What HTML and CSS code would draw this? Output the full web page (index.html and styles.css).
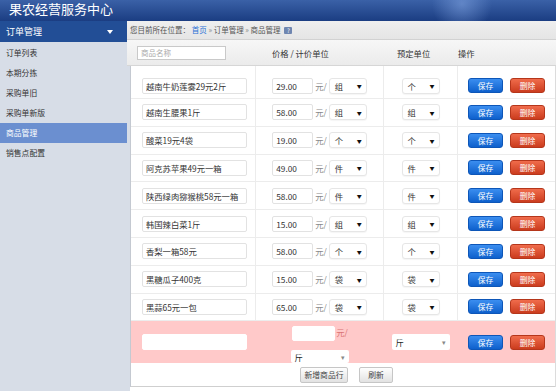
FILE: index.html
```html
<!DOCTYPE html>
<html>
<head>
<meta charset="utf-8">
<title>果农经营服务中心</title>
<link rel="stylesheet" href="styles.css">
</head>
<body>

<div class="top">
    <div class="brand">果农经营服务中心</div>
</div>

<div class="layout">
    <!-- Left menu -->
    <aside class="side">
        <div class="side-head">
            <span>订单管理</span>
            <span class="caret"></span>
        </div>
        <ul class="side-menu">
            <li>订单列表</li>
            <li>本期分拣</li>
            <li>采购单旧</li>
            <li>采购单新版</li>
            <li class="active">商品管理</li>
            <li>销售点配置</li>
        </ul>
    </aside>

    <main class="main">
        <div class="crumb">
            您目前所在位置： <a href="#">首页</a> <span class="sep">»</span> 订单管理 <span class="sep">»</span> 商品管理 <span class="help">?</span>
        </div>

        <div class="thead">
            <div><input class="search" type="text" placeholder="商品名称"></div>
            <div>价格 / 计价单位</div>
            <div>预定单位</div>
            <div>操作</div>
        </div>

        <div class="sheet">
            <table class="goods">
                <colgroup>
                    <col class="c-name">
                    <col class="c-price">
                    <col class="c-unit">
                    <col>
                </colgroup>
                <tbody>
                    <tr class="first">
                        <td class="name"><input class="txt" type="text" value="越南牛奶莲雾29元2斤"></td>
                        <td><div class="cell"><input class="txt num" type="text" value="29.00"><span class="per">元/</span><span class="sel">组</span></div></td>
                        <td><div class="cell"><span class="sel">个</span></div></td>
                        <td><div class="cell ops"><button class="btn save">保存</button><button class="btn del">删除</button></div></td>
                    </tr>
                    <tr>
                        <td class="name"><input class="txt" type="text" value="越南生腰果1斤"></td>
                        <td><div class="cell"><input class="txt num" type="text" value="58.00"><span class="per">元/</span><span class="sel">组</span></div></td>
                        <td><div class="cell"><span class="sel">组</span></div></td>
                        <td><div class="cell ops"><button class="btn save">保存</button><button class="btn del">删除</button></div></td>
                    </tr>
                    <tr>
                        <td class="name"><input class="txt" type="text" value="酸菜19元4袋"></td>
                        <td><div class="cell"><input class="txt num" type="text" value="19.00"><span class="per">元/</span><span class="sel">个</span></div></td>
                        <td><div class="cell"><span class="sel">个</span></div></td>
                        <td><div class="cell ops"><button class="btn save">保存</button><button class="btn del">删除</button></div></td>
                    </tr>
                    <tr>
                        <td class="name"><input class="txt" type="text" value="阿克苏苹果49元一箱"></td>
                        <td><div class="cell"><input class="txt num" type="text" value="49.00"><span class="per">元/</span><span class="sel">件</span></div></td>
                        <td><div class="cell"><span class="sel">件</span></div></td>
                        <td><div class="cell ops"><button class="btn save">保存</button><button class="btn del">删除</button></div></td>
                    </tr>
                    <tr>
                        <td class="name"><input class="txt" type="text" value="陕西绿肉猕猴桃58元一箱"></td>
                        <td><div class="cell"><input class="txt num" type="text" value="58.00"><span class="per">元/</span><span class="sel">件</span></div></td>
                        <td><div class="cell"><span class="sel">件</span></div></td>
                        <td><div class="cell ops"><button class="btn save">保存</button><button class="btn del">删除</button></div></td>
                    </tr>
                    <tr>
                        <td class="name"><input class="txt" type="text" value="韩国辣白菜1斤"></td>
                        <td><div class="cell"><input class="txt num" type="text" value="15.00"><span class="per">元/</span><span class="sel">组</span></div></td>
                        <td><div class="cell"><span class="sel">组</span></div></td>
                        <td><div class="cell ops"><button class="btn save">保存</button><button class="btn del">删除</button></div></td>
                    </tr>
                    <tr>
                        <td class="name"><input class="txt" type="text" value="香梨一箱58元"></td>
                        <td><div class="cell"><input class="txt num" type="text" value="58.00"><span class="per">元/</span><span class="sel">个</span></div></td>
                        <td><div class="cell"><span class="sel">个</span></div></td>
                        <td><div class="cell ops"><button class="btn save">保存</button><button class="btn del">删除</button></div></td>
                    </tr>
                    <tr>
                        <td class="name"><input class="txt" type="text" value="黑糖瓜子400克"></td>
                        <td><div class="cell"><input class="txt num" type="text" value="15.00"><span class="per">元/</span><span class="sel">袋</span></div></td>
                        <td><div class="cell"><span class="sel">袋</span></div></td>
                        <td><div class="cell ops"><button class="btn save">保存</button><button class="btn del">删除</button></div></td>
                    </tr>
                    <tr>
                        <td class="name"><input class="txt" type="text" value="黑蒜65元一包"></td>
                        <td><div class="cell"><input class="txt num" type="text" value="65.00"><span class="per">元/</span><span class="sel">袋</span></div></td>
                        <td><div class="cell"><span class="sel">袋</span></div></td>
                        <td><div class="cell ops"><button class="btn save">保存</button><button class="btn del">删除</button></div></td>
                    </tr>

                    <!-- New product row -->
                    <tr class="add">
                        <td class="name"><input class="txt blank" type="text"></td>
                        <td>
                            <div class="stack">
                                <div class="line"><input class="txt blank num-new" type="text"><span class="per red">元/</span></div>
                                <span class="drop small">斤</span>
                            </div>
                        </td>
                        <td><div class="cell"><span class="drop">斤</span></div></td>
                        <td><div class="cell ops"><button class="btn save">保存</button><button class="btn del">删除</button></div></td>
                    </tr>

                    <tr class="foot">
                        <td colspan="4">
                            <div class="cell actions">
                                <button class="btn-plain wide">新增商品行</button>
                                <button class="btn-plain">刷新</button>
                            </div>
                        </td>
                    </tr>
                </tbody>
            </table>
        </div>
    </main>
</div>

</body>
</html>
```

FILE: styles.css
```css
* {
    box-sizing: border-box;
}

body {
    margin: 0;
    width: 556px;
    height: 391px;
    overflow: hidden;
    font-family: "Noto Sans CJK SC", "Liberation Sans", sans-serif;
    font-size: 8.3px;
    color: #333;
    background: #fff;
}

/* top bar */
.top {
    height: 21px;
    padding-left: 9px;
    background:
        radial-gradient(circle at 462px 4px, rgba(140, 175, 235, 0.5), rgba(140, 175, 235, 0) 30px),
        linear-gradient(#3a61a7, #1b3d82);
}

.brand {
    color: #fff;
    font-size: 13px;
    line-height: 18px;
}

.layout {
    display: grid;
    grid-template-columns: 127px 1fr;
    height: 370px;
}

/* sidebar */
.side {
    background: #d7dde7;
}

.side-head {
    height: 21px;
    padding: 0 14px 0 6px;
    display: flex;
    align-items: center;
    justify-content: space-between;
    background: #224e96;
    color: #fff;
    font-size: 9px;
}

.caret {
    border-left: 3px solid transparent;
    border-right: 3px solid transparent;
    border-top: 4px solid #fff;
}

.side-menu {
    list-style: none;
    margin: 0;
    padding: 1px 0 0;
}

.side-menu li {
    height: 20px;
    line-height: 20px;
    padding-left: 6px;
    font-size: 7.8px;
    color: #333;
}

.side-menu li.active {
    background: #6b8fd0;
    color: #fff;
}

/* main area */
.main {
    background: linear-gradient(to right, #d7dde7 3px, #fff 3px);
}

.crumb {
    height: 19px;
    line-height: 18px;
    padding-left: 3px;
    background: linear-gradient(#efefef, #e5e5e5);
    border-bottom: 1px solid #d2d2d2;
    font-size: 7.5px;
    color: #555;
}

.crumb a {
    color: #2b6fd6;
    text-decoration: none;
}

.crumb .sep {
    color: #888;
}

.help {
    display: inline-block;
    width: 8px;
    height: 7px;
    margin-left: 2px;
    background: #6f86b0;
    color: #fff;
    font-size: 6px;
    line-height: 7px;
    text-align: center;
    border-radius: 1px;
    vertical-align: middle;
}

.thead {
    height: 26px;
    padding-left: 10px;
    display: grid;
    grid-template-columns: 135px 125px 61px 1fr;
    align-items: center;
    background: linear-gradient(#f7f7f7, #ebebeb);
    border-bottom: 1px solid #d6d6d6;
}

.search {
    display: block;
    width: 89px;
    height: 14px;
    padding: 0 3px;
    border: 1px solid #c9c9c9;
    background: #fff;
    font: inherit;
    font-size: 7.5px;
}

.search::placeholder {
    color: #aaa;
}

/* table */
.sheet {
    margin-left: 3px;
    border-left: 1px solid #c4c9d1;
    border-right: 1px solid #dcdcdc;
}

.goods {
    width: 100%;
    border-collapse: separate;
    border-spacing: 0;
    table-layout: fixed;
}

.c-name {
    width: 125px;
}

.c-price {
    width: 128px;
}

.c-unit {
    width: 74px;
}

.goods td {
    height: 27.8px;
    padding: 0;
    border-bottom: 1px solid #ececec;
    border-right: 1px solid #ececec;
    vertical-align: middle;
}

.goods td:last-child {
    border-right: none;
}

.goods tr.first td {
    height: 33px;
    padding-top: 7px;
}

.goods td.name {
    padding-left: 11px;
}

.cell {
    display: flex;
    align-items: center;
    justify-content: center;
}

.txt {
    display: block;
    width: 105px;
    height: 16px;
    padding: 0 3px;
    border: 1px solid #e2e2e2;
    border-radius: 2px;
    background: #fff;
    font: inherit;
    color: #333;
}

.txt.num {
    width: 41px;
}

.per {
    margin: 0 2px;
    color: #888;
}

.sel {
    width: 38px;
    height: 16px;
    padding: 0 4px 0 5px;
    display: flex;
    align-items: center;
    justify-content: space-between;
    border: 1px solid #e6e6e6;
    border-radius: 3px;
    background: #fff;
    box-shadow: 0 1px 1px rgba(0, 0, 0, 0.04);
}

.sel::after {
    content: "▼";
    font-size: 5px;
    color: #111;
}

.ops {
    gap: 7px;
}

.btn {
    width: 35px;
    height: 15px;
    padding: 0;
    border: 1px solid;
    border-radius: 3px;
    font: inherit;
    font-size: 7.8px;
    color: #fff;
}

.btn.save {
    background: linear-gradient(#3b8ef0, #0e60cc);
    border-color: #0d56b8;
}

.btn.del {
    background: linear-gradient(#f06c4c, #cb3c1e);
    border-color: #b5361b;
}

/* new row */
.goods tr.add td {
    height: 41px;
    background: #ffc9c9;
    border-right-color: #ffc9c9;
    border-bottom: none;
}

.txt.blank {
    border-color: #fff;
}

.stack {
    display: flex;
    flex-direction: column;
    align-items: center;
    gap: 9px;
    padding-top: 5px;
}

.stack .line {
    display: flex;
    align-items: flex-start;
    padding-left: 1px;
}

.txt.num-new {
    width: 43px;
    height: 15px;
}

.per.red {
    margin: 0 0 0 1px;
    color: #d97373;
}

.drop {
    width: 58px;
    height: 16px;
    padding: 0 4px;
    display: flex;
    align-items: center;
    justify-content: space-between;
    background: #fff;
    border-radius: 2px;
    color: #222;
}

.drop::after {
    content: "▾";
    font-size: 7px;
    color: #888;
}

.drop.small {
    height: 13px;
}

/* footer buttons */
.goods tr.foot td {
    height: 24px;
    border-bottom: 1px solid #cfcfcf;
}

.actions {
    gap: 11px;
    padding-left: 7px;
}

.btn-plain {
    width: 34px;
    height: 16px;
    padding: 0;
    border: 1px solid #c6c6c6;
    border-radius: 2px;
    background: linear-gradient(#fefefe, #e2e2e2);
    font: inherit;
    font-size: 7.8px;
    color: #444;
}

.btn-plain.wide {
    width: 48px;
}
```
